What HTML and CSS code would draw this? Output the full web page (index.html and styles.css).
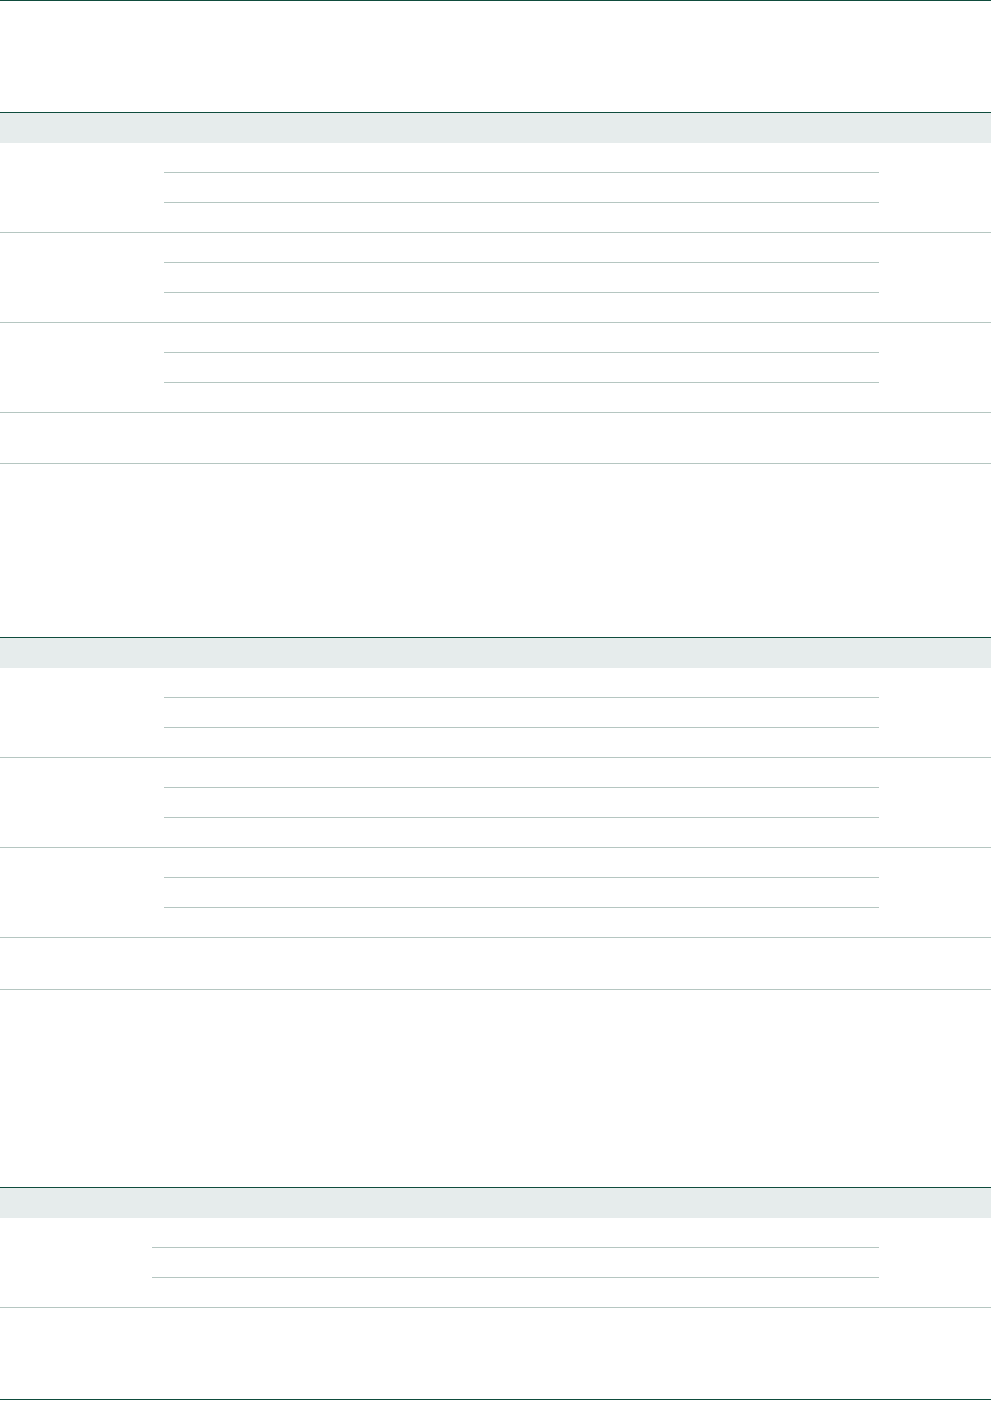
FILE: index.html
```html
<!DOCTYPE html>
<html lang="en">
<head>
  <meta charset="UTF-8">
  <meta name="viewport" content="width=device-width, initial-scale=1.0">
  <title>Sheet</title>
  <link rel="stylesheet" href="styles.css">
</head>
<body>
  <div class="page">
    <div class="rule"></div>

    <div class="sheet sheet-one">
      <div class="sheet-head"></div>
      <div class="group">
        <div class="group-label"></div>
        <div class="group-lines">
          <div class="line-row"></div>
          <div class="line-row"></div>
          <div class="line-row"></div>
        </div>
        <div class="group-side"></div>
      </div>
      <div class="group">
        <div class="group-label"></div>
        <div class="group-lines">
          <div class="line-row"></div>
          <div class="line-row"></div>
          <div class="line-row"></div>
        </div>
        <div class="group-side"></div>
      </div>
      <div class="group">
        <div class="group-label"></div>
        <div class="group-lines">
          <div class="line-row"></div>
          <div class="line-row"></div>
          <div class="line-row"></div>
        </div>
        <div class="group-side"></div>
      </div>
      <div class="total-row"></div>
    </div>

    <div class="sheet sheet-two">
      <div class="sheet-head"></div>
      <div class="group">
        <div class="group-label"></div>
        <div class="group-lines">
          <div class="line-row"></div>
          <div class="line-row"></div>
          <div class="line-row"></div>
        </div>
        <div class="group-side"></div>
      </div>
      <div class="group">
        <div class="group-label"></div>
        <div class="group-lines">
          <div class="line-row"></div>
          <div class="line-row"></div>
          <div class="line-row"></div>
        </div>
        <div class="group-side"></div>
      </div>
      <div class="group">
        <div class="group-label"></div>
        <div class="group-lines">
          <div class="line-row"></div>
          <div class="line-row"></div>
          <div class="line-row"></div>
        </div>
        <div class="group-side"></div>
      </div>
      <div class="total-row total-row-tall"></div>
    </div>

    <div class="sheet sheet-three">
      <div class="sheet-head"></div>
      <div class="group group-narrow">
        <div class="group-label"></div>
        <div class="group-lines">
          <div class="line-row"></div>
          <div class="line-row"></div>
          <div class="line-row"></div>
        </div>
        <div class="group-side"></div>
      </div>
    </div>

    <div class="rule rule-bottom"></div>
  </div>
</body>
</html>
```

FILE: styles.css
```css
body {
  margin: 0;
  padding: 0;
  background-color: #fff;
  font-family: "Liberation Sans", Arial, sans-serif;
}

.page {
  width: 991px;
  display: flex;
  flex-direction: column;
}

.rule {
  height: 1px;
  background-color: #0f4c3d;
}

.rule-bottom {
  margin-top: 91px;
}

.sheet {
  border-top: 1px solid #0f4c3d;
}

.sheet-one {
  margin-top: 111px;
}

.sheet-two {
  margin-top: 173px;
}

.sheet-three {
  margin-top: 197px;
}

.sheet-head {
  height: 30px;
  background-color: #e6ecec;
}

.group {
  display: flex;
  border-bottom: 1px solid #b5c6c1;
}

.group-label {
  width: 164px;
  flex-shrink: 0;
}

.group-narrow .group-label {
  width: 152px;
}

.group-lines {
  flex: 1;
  display: flex;
  flex-direction: column;
}

.group-side {
  width: 112px;
  flex-shrink: 0;
}

.line-row {
  height: 29px;
  border-bottom: 1px solid #b5c6c1;
}

.line-row:last-child {
  border-bottom: none;
}

.total-row {
  height: 50px;
  border-bottom: 1px solid #b5c6c1;
}

.total-row-tall {
  height: 51px;
}
```
